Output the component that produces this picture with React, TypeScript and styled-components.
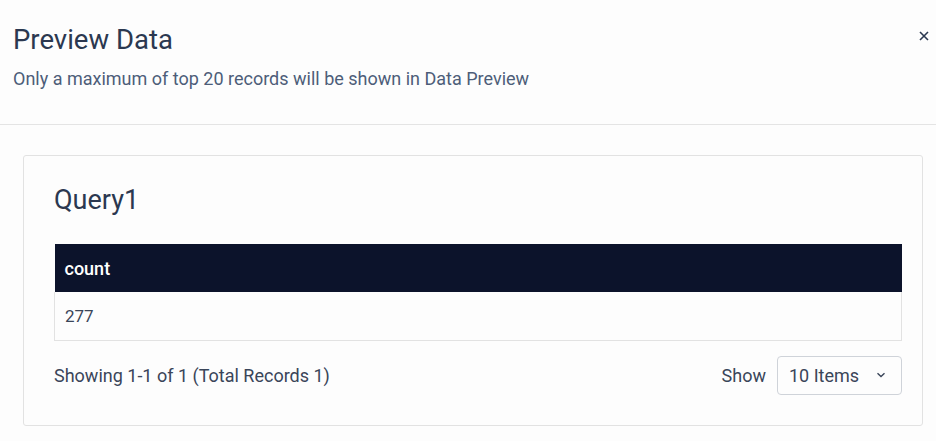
import React from "react";
import styled, { createGlobalStyle } from "styled-components";

const Global = createGlobalStyle`
  html, body { margin: 0; padding: 0; background: #fdfdfd; }
  body { font-family: Roboto, "Liberation Sans", sans-serif; color: #2d3a4f; }
  * { box-sizing: border-box; }
`;

const Page = styled.div`
  width: 936px;
  height: 441px;
  overflow: hidden;
  background: #fdfdfd;
`;

const Header = styled.header`
  position: relative;
  padding: 21px 13px 0;
  height: 125px;
  border-bottom: 1px solid #e4e4e4;
`;

const Title = styled.h1`
  margin: 0;
  font-size: 27.5px;
  line-height: 38px;
  font-weight: 400;
  color: #2b3850;
`;

const Subtitle = styled.p`
  margin: 8px 0 0;
  font-size: 18px;
  line-height: 24px;
  color: #4d5d79;
`;

const Close = styled.button`
  position: absolute;
  top: 30px;
  right: 6px;
  width: 12px;
  height: 12px;
  padding: 0;
  border: 0;
  background: none;
  display: flex;
  align-items: center;
  justify-content: center;
`;

const Body = styled.main`
  padding: 30px 13px 0 23px;
`;

const Card = styled.section`
  border: 1px solid #e2e2e2;
  border-radius: 3px;
  background: #fdfdfd;
  padding: 25px 20px 30px 30px;
`;

const CardTitle = styled.h2`
  margin: 0;
  font-size: 27px;
  line-height: 38px;
  font-weight: 400;
  color: #2b3850;
`;

const Table = styled.table`
  width: 100%;
  margin-top: 25px;
  border-collapse: collapse;
  font-size: 18px;
`;

const Th = styled.th`
  background: #0c132b;
  color: #ffffff;
  text-align: left;
  font-weight: 500;
  height: 48px;
  padding: 0 10px;
`;

const Td = styled.td`
  height: 48px;
  padding: 0 10px;
  border: 1px solid #e2e2e2;
  border-top: 0;
  color: #3a4559;
  font-size: 17px;
`;

const Footer = styled.div`
  display: flex;
  align-items: center;
  justify-content: space-between;
  margin-top: 15px;
`;

const Info = styled.span`
  font-size: 18px;
  color: #3a4559;
`;

const ShowGroup = styled.div`
  display: flex;
  align-items: center;
  gap: 11px;
  font-size: 18px;
  color: #3a4559;
`;

const Select = styled.div`
  width: 125px;
  height: 39px;
  border: 1px solid #cfd3d9;
  border-radius: 4px;
  display: flex;
  align-items: center;
  justify-content: space-between;
  padding: 0 15px 0 11px;
  font-size: 18px;
  color: #3a4559;
`;

export default function App() {
  return (
    <Page>
      <Global />
      <Header>
        <Title>Preview Data</Title>
        <Subtitle>Only a maximum of top 20 records will be shown in Data Preview</Subtitle>
        <Close aria-label="Close">
          <svg width="10" height="10" viewBox="0 0 10 10">
            <path d="M1 1L9 9M9 1L1 9" stroke="#2b3850" strokeWidth="1.6" />
          </svg>
        </Close>
      </Header>
      <Body>
        <Card>
          <CardTitle>Query1</CardTitle>
          <Table>
            <thead>
              <tr>
                <Th>count</Th>
              </tr>
            </thead>
            <tbody>
              <tr>
                <Td>277</Td>
              </tr>
            </tbody>
          </Table>
          <Footer>
            <Info>Showing 1-1 of 1 (Total Records 1)</Info>
            <ShowGroup>
              Show
              <Select>
                10 Items
                <svg width="10" height="6" viewBox="0 0 10 6">
                  <path d="M1.5 1.2L5 4.5L8.5 1.2" stroke="#3a4559" strokeWidth="1.4" fill="none" />
                </svg>
              </Select>
            </ShowGroup>
          </Footer>
        </Card>
      </Body>
    </Page>
  );
}
